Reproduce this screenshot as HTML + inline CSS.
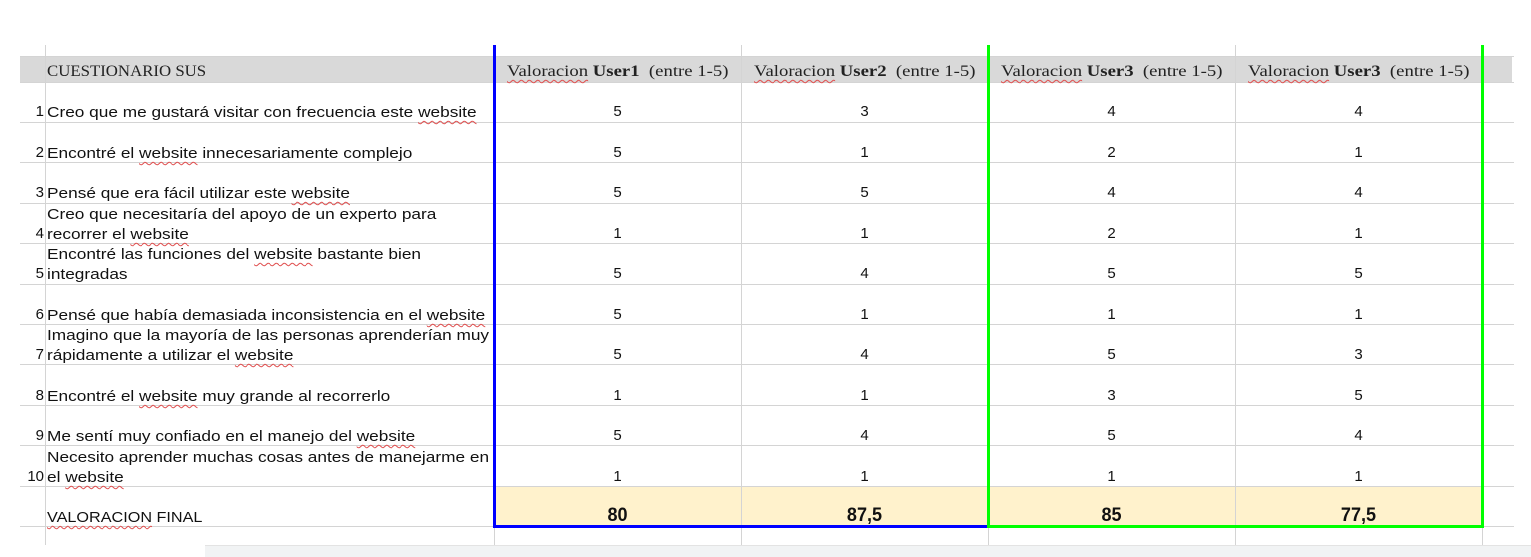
<!DOCTYPE html>
<html><head><meta charset="utf-8"><style>
body{margin:0;width:1531px;height:556px;background:#fff;position:relative;overflow:hidden;font-family:"Liberation Sans",Arial,sans-serif;font-size:15px;color:#111}
.a{position:absolute}
.hl{position:absolute;left:20px;width:1494px;height:1px;background:#d4d4d4}
.vl{position:absolute;width:1px;background:#d4d4d4}
.hd{position:absolute;top:58px;height:26px;line-height:28px;font-family:"Liberation Serif",serif;font-size:16px;color:#222;transform:scaleX(1.17);transform-origin:0 0;white-space:nowrap}
.sq{text-decoration:underline wavy #e05050;text-decoration-thickness:1px;text-underline-offset:3px}
.n{position:absolute;width:30px;left:14px;text-align:right}
.t{position:absolute;left:47px;line-height:20px;transform:scaleX(1.15);transform-origin:0 0;white-space:nowrap}
.v{position:absolute;width:247px;text-align:center}
</style></head><body>
<div class="a" style="left:20px;top:56px;width:1492px;height:26px;background:#d9d9d9"></div>
<div class="a" style="left:494px;top:486px;width:988px;height:40px;background:#fff2cc"></div>
<div class="vl" style="left:45px;top:45px;height:500px"></div>
<div class="vl" style="left:741px;top:45px;height:500px"></div>
<div class="vl" style="left:1235px;top:45px;height:500px"></div>
<div class="vl" style="left:494px;top:45px;height:500px"></div>
<div class="vl" style="left:988px;top:45px;height:500px"></div>
<div class="vl" style="left:1482px;top:45px;height:500px"></div>
<div class="hl" style="top:56px"></div>
<div class="hl" style="top:82px"></div>
<div class="hl" style="top:122px"></div>
<div class="hl" style="top:162px"></div>
<div class="hl" style="top:203px"></div>
<div class="hl" style="top:243px"></div>
<div class="hl" style="top:284px"></div>
<div class="hl" style="top:324px"></div>
<div class="hl" style="top:364px"></div>
<div class="hl" style="top:405px"></div>
<div class="hl" style="top:445px"></div>
<div class="hl" style="top:486px"></div>
<div class="hl" style="top:526px"></div>
<div class="a" style="left:493px;top:45px;width:3px;height:483px;background:#0000ff"></div>
<div class="a" style="left:493px;top:525px;width:496px;height:3px;background:#0000ff"></div>
<div class="a" style="left:987px;top:45px;width:3px;height:483px;background:#00ff00"></div>
<div class="a" style="left:1481px;top:45px;width:3px;height:483px;background:#00ff00"></div>
<div class="a" style="left:989px;top:525px;width:495px;height:3px;background:#00ff00"></div>
<div class="a" style="left:205px;top:545px;width:1326px;height:11px;background:#f1f3f4;border-top:1px solid #e3e3e3"></div>

<div class="hd" style="left:47px;transform:scaleX(1.05)">CUESTIONARIO SUS</div>
<div class="hd" style="left:507px"><span class="sq">Valoracion</span> <b>User1</b>&nbsp; (entre 1-5)</div>
<div class="hd" style="left:754px"><span class="sq">Valoracion</span> <b>User2</b>&nbsp; (entre 1-5)</div>
<div class="hd" style="left:1001px"><span class="sq">Valoracion</span> <b>User3</b>&nbsp; (entre 1-5)</div>
<div class="hd" style="left:1248px"><span class="sq">Valoracion</span> <b>User3</b>&nbsp; (entre 1-5)</div>

<div class="n" style="top:103px">1</div><div class="t" style="top:103px">Creo que me gustará visitar con frecuencia este <span class="sq">website</span></div>
<div class="n" style="top:144px">2</div><div class="t" style="top:144px">Encontré el <span class="sq">website</span> innecesariamente complejo</div>
<div class="n" style="top:184px">3</div><div class="t" style="top:184px">Pensé que era fácil utilizar este <span class="sq">website</span></div>
<div class="n" style="top:225px">4</div><div class="t" style="top:205px">Creo que necesitaría del apoyo de un experto para<br>recorrer el <span class="sq">website</span></div>
<div class="n" style="top:265px">5</div><div class="t" style="top:245px">Encontré las funciones del <span class="sq">website</span> bastante bien<br>integradas</div>
<div class="n" style="top:306px">6</div><div class="t" style="top:306px">Pensé que había demasiada inconsistencia en el <span class="sq">website</span></div>
<div class="n" style="top:346px">7</div><div class="t" style="top:326px">Imagino que la mayoría de las personas aprenderían muy<br>rápidamente a utilizar el <span class="sq">website</span></div>
<div class="n" style="top:387px">8</div><div class="t" style="top:387px">Encontré el <span class="sq">website</span> muy grande al recorrerlo</div>
<div class="n" style="top:427px">9</div><div class="t" style="top:427px">Me sentí muy confiado en el manejo del <span class="sq">website</span></div>
<div class="n" style="top:468px">10</div><div class="t" style="top:448px">Necesito aprender muchas cosas antes de manejarme en<br>el <span class="sq">website</span></div>
<div class="t" style="top:508px;transform:scaleX(1.08)"><span class="sq">VALORACION</span> FINAL</div>

<div id="vals"></div>
<script>
var d=[[5,3,4,4],[5,1,2,1],[5,5,4,4],[1,1,2,1],[5,4,5,5],[5,1,1,1],[5,4,5,3],[1,1,3,5],[5,4,5,4],[1,1,1,1]];
var tops=[103,144,184,225,265,306,346,387,427,468];
var xs=[494,741,988,1235],h='';
d.forEach(function(r,i){r.forEach(function(v,j){h+='<div class="v" style="left:'+xs[j]+'px;top:'+tops[i]+'px">'+v+'</div>';});});
['80','87,5','85','77,5'].forEach(function(v,j){h+='<div class="v" style="left:'+xs[j]+'px;top:505px;font-weight:bold;font-size:19px;transform:scaleX(0.95)">'+v+'</div>';});
document.getElementById('vals').innerHTML=h;
</script>
</body></html>
